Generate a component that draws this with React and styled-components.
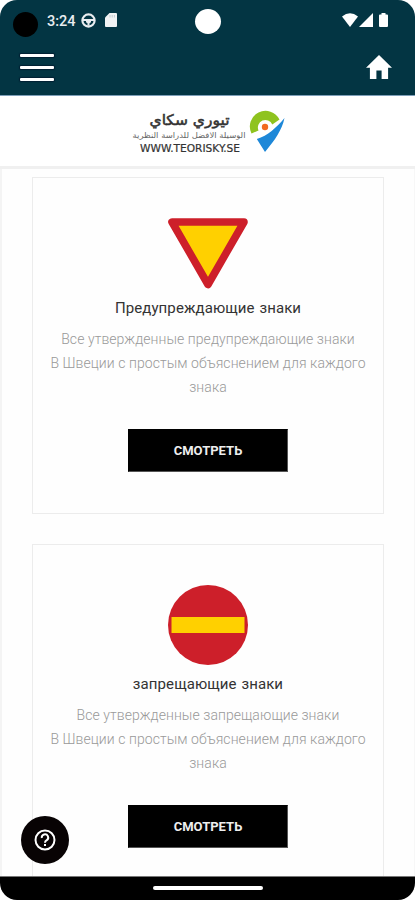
import React from 'react'
import styled, { createGlobalStyle } from 'styled-components'

const cards = [
  {
    sign: 'warning',
    title: 'Предупреждающие знаки',
    lines: [
      'Все утвержденные предупреждающие знаки',
      'В Швеции с простым объяснением для каждого',
      'знака',
    ],
  },
  {
    sign: 'forbidden',
    title: 'запрещающие знаки',
    lines: [
      'Все утвержденные запрещающие знаки',
      'В Швеции с простым объяснением для каждого',
      'знака',
    ],
  },
]

const StatusIcons = () => (
  <StatusRight>
    <svg width="16" height="14" viewBox="0 0 16 14">
      <path d="M0 3.600Q8-3 16 3.600L8 14z" fill="#fff" />
    </svg>
    <svg width="14" height="14" viewBox="0 0 14 14">
      <path d="M14 0v14H0z" fill="#fff" />
    </svg>
    <Battery width="9" height="14" viewBox="0 0 9 14">
      <path d="M2.500 0h4v1.500H8q1 0 1 1V13q0 1-1 1H1q-1 0-1-1V2.500q0-1 1-1h1.500z" fill="#fff" />
    </Battery>
  </StatusRight>
)

const Header = () => (
  <HeaderStyle>
    <Lens />
    <StatusBar>
      <Clock>3:24</Clock>
      <svg width="15" height="15" viewBox="0 0 15 15" fill="none" stroke="#e9edf0">
        <circle cx="7.500" cy="7.500" r="6.100" strokeWidth="2.200" />
        <path d="M2 7h11" strokeWidth="1.800" />
        <path d="M5 7.500h5v1.800l-1.500 1v2.500h-2v-2.500L5 9.300z" fill="#e9edf0" stroke="none" />
      </svg>
      <SdCard width="12" height="14" viewBox="0 0 12 14">
        <path d="M4.500 0H11q1 0 1 1v12q0 1-1 1H1q-1 0-1-1V4.500z" fill="#f1f3f4" />
        <path d="M5 2v2.500M7.200 2v2.500M9.400 2v2.500" stroke="#c3ccd0" strokeWidth="1" />
      </SdCard>
      <StatusIcons />
    </StatusBar>
    <Camera />
    <NavBar>
      <Burger>
        <i />
        <i />
        <i />
      </Burger>
      <svg width="26" height="24" viewBox="2 3 20 17" preserveAspectRatio="none">
        <path d="M10 20v-6h4v6h5v-8h3L12 3 2 12h3v8z" fill="#fff" />
      </svg>
    </NavBar>
  </HeaderStyle>
)

const Logo = () => (
  <LogoStrip>
    <svg width="154" height="48" viewBox="0 0 154 48">
      <g fontFamily="'DejaVu Sans', sans-serif" textAnchor="middle">
        <text x="57.500" y="16" fontSize="14.500" fill="#333" stroke="#333" strokeWidth="0.500" textLength="80" lengthAdjust="spacingAndGlyphs">تيوري سكاي</text>
        <text x="57" y="29" fontSize="8" fill="#666" textLength="113" lengthAdjust="spacingAndGlyphs">الوسيلة الافضل للدراسة النظرية</text>
        <text x="58" y="42.500" fontSize="10" fill="#333" stroke="#333" strokeWidth="0.200" textLength="100" lengthAdjust="spacingAndGlyphs">WWW.TEORISKY.SE</text>
      </g>
      <path d="M119.500 24.500A15.500 15.500 0 1 1 147.500 10.500L140.300 15.500A7.500 7.500 0 1 0 126.500 21.500z" fill="#8fc31f" />
      <circle cx="133" cy="18" r="3.200" fill="#f26a21" />
      <path d="M152.500 9C150 21 143 31 133 43L124.800 30C136 26.500 144 19 152.500 9z" fill="#1e88d8" />
    </svg>
  </LogoStrip>
)

const WarningSign = () => (
  <svg width="80" height="71" viewBox="0 0 80 71">
    <path d="M4 4h72L40 66.500z" fill="#ffd000" stroke="#cd1f2a" strokeWidth="7.600" strokeLinejoin="round" />
  </svg>
)

const ForbiddenSign = () => (
  <svg width="80" height="80" viewBox="0 0 80 80">
    <circle cx="40" cy="40" r="40" fill="#cd1f2a" />
    <path d="M3.500 32h73v16h-73z" fill="#ffd000" />
  </svg>
)

const SignCard = ({ card }) => (
  <Card>
    {card.sign === 'warning' ? <WarningSign /> : <ForbiddenSign />}
    <Title>{card.title}</Title>
    <Description>
      {card.lines.map((line) => (
        <span key={line}>{line}</span>
      ))}
    </Description>
    <Button>СМОТРЕТЬ</Button>
  </Card>
)

const App = () => {
  return (
    <>
      <GlobalStyle />
      <Phone>
        <Header />
        <Logo />
        <Content>
          {cards.map((card) => (
            <SignCard key={card.sign} card={card} />
          ))}
        </Content>
        <Help>
          <svg width="22" height="22" viewBox="0 0 22 22" fill="none" stroke="#fff">
            <circle cx="11" cy="11" r="9.500" strokeWidth="2" />
            <path d="M7.800 9A3.200 3.200 0 1 1 12.800 11.200Q11 12.300 11 13.700" strokeWidth="2" />
            <path d="M11 15v2" strokeWidth="2" />
          </svg>
        </Help>
        <Footer>
          <span />
        </Footer>
      </Phone>
    </>
  )
}

export default App

const GlobalStyle = createGlobalStyle`
*{
  box-sizing: border-box;
}
body{
  margin: 0;
  background: #fff;
  font-family: Roboto, sans-serif;
}
svg{
  display: block;
  flex-shrink: 0;
}
`

const Phone = styled.div`
position: relative;
width: 415px;
height: 900px;
display: flex;
flex-direction: column;
overflow: hidden;
border-radius: 17px;
background: #fefefe;
`

const HeaderStyle = styled.header`
position: relative;
height: 96px;
flex-shrink: 0;
background: #033543;
border-bottom: 1px solid #7d9eb8;
`

const StatusBar = styled.div`
display: flex;
align-items: center;
height: 40px;
padding: 0 27px 0 47px;
`

const Clock = styled.span`
width: 34px;
padding-top: 3px;
font-size: 14.5px;
font-weight: 500;
line-height: 16px;
color: #e9edf0;
`

const SdCard = styled.svg`
margin-left: 9px;
`

const StatusRight = styled.div`
display: flex;
margin-left: auto;
gap: 1px;
`

const Battery = styled.svg`
margin-left: 5px;
`

/* round dots lying over the status bar */
const Lens = styled.div`
position: absolute;
left: 12.5px;
top: 12px;
width: 25px;
height: 25px;
border-radius: 50%;
background: #000;
`

const Camera = styled(Lens)`
left: 195px;
top: 9px;
width: 26px;
background: #fff;
`

const NavBar = styled.nav`
display: flex;
align-items: center;
justify-content: space-between;
height: 54px;
padding: 0 23px 0 20px;
`

const Burger = styled.div`
display: flex;
flex-direction: column;
gap: 9px;
width: 34px;
i{
  height: 3px;
  border-radius: 1px;
  background: #fff;
  box-shadow: 0 0 1px 1px rgba(0, 10, 35, 0.5);
}
`

const LogoStrip = styled.div`
display: flex;
height: 73px;
flex-shrink: 0;
padding: 13px 0 0 132px;
background: #fff;
border-bottom: 3px solid #f0f0f0;
`

const Content = styled.main`
display: flex;
flex-direction: column;
flex: 1;
min-height: 0;
overflow: hidden;
gap: 30px;
padding: 8px 30px 0;
border-left: 2px solid #f4f4f4;
border-right: 1px solid #f7f7f7;
`

const Card = styled.section`
display: flex;
flex-direction: column;
align-items: center;
flex-shrink: 0;
padding: 40px 0 41px;
border: 1px solid #ececec;
`

const Title = styled.h3`
margin: 7px 0 0;
font-size: 15px;
font-weight: 400;
line-height: 24px;
letter-spacing: 0.1px;
word-spacing: 1px;
white-space: nowrap;
color: #333;
`

const Description = styled.div`
display: flex;
flex-direction: column;
align-items: center;
margin: 7px 0 30px;
font-size: 14px;
font-weight: 300;
line-height: 24px;
letter-spacing: 0.07px;
white-space: nowrap;
color: #999;
`

const Button = styled.button`
width: 160px;
height: 43px;
padding: 0;
border: 1px solid #555;
border-top-color: #000;
border-left-color: #000;
background: #000;
color: #eee;
font-family: inherit;
font-size: 13px;
font-weight: 700;
`

const Help = styled.div`
position: absolute;
left: 21px;
top: 816px;
display: flex;
align-items: center;
justify-content: center;
width: 48px;
height: 48px;
border-radius: 50%;
background: #080304;
`

const Footer = styled.footer`
display: flex;
justify-content: center;
height: 24px;
flex-shrink: 0;
padding-top: 9px;
background: #000;
border-top: 1px solid #777;
span{
  width: 110px;
  height: 4px;
  border-radius: 2px;
  background: #fff;
}
`
